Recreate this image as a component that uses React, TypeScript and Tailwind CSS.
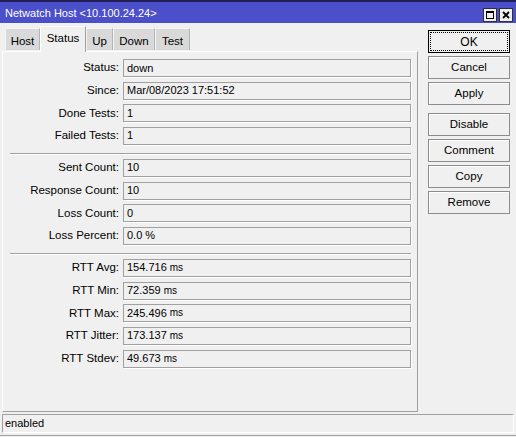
import React from "react";

type Row = { label: string; value: string; unit?: string };

const group1: Row[] = [
  { label: "Status", value: "down" },
  { label: "Since", value: "Mar/08/2023 17:51:52" },
  { label: "Done Tests", value: "1" },
  { label: "Failed Tests", value: "1" },
];
const group2: Row[] = [
  { label: "Sent Count", value: "10" },
  { label: "Response Count", value: "10" },
  { label: "Loss Count", value: "0" },
  { label: "Loss Percent", value: "0.0 %" },
];
const group3: Row[] = [
  { label: "RTT Avg", value: "154.716", unit: "ms" },
  { label: "RTT Min", value: "72.359", unit: "ms" },
  { label: "RTT Max", value: "245.496", unit: "ms" },
  { label: "RTT Jitter", value: "173.137", unit: "ms" },
  { label: "RTT Stdev", value: "49.673", unit: "ms" },
];

function Field({ row }: { row: Row }) {
  return (
    <div className="flex items-center h-[18px]">
      <div className="w-[116px] text-right leading-none text-[11.5px]">{row.label}:</div>
      <div className="ml-[4px] w-[288px] h-[18px] border border-[#a0a0a0] shadow-[1px_1px_0_#ffffff] pl-[3px] flex items-center leading-none">
        <span>{row.value}</span>
        {row.unit && <span className="ml-[3px] text-[10px]">{row.unit}</span>}
      </div>
    </div>
  );
}

function Group({ rows }: { rows: Row[] }) {
  return (
    <div className="flex flex-col gap-[4.67px]">
      {rows.map((r) => (
        <Field key={r.label} row={r} />
      ))}
    </div>
  );
}

function Separator() {
  return <div className="ml-[7px] w-[401px] h-[2px] border-t border-[#a0a0a0] bg-white mt-[8px] mb-[4px]" />;
}

function Btn({ label, focused }: { label: string; focused?: boolean }) {
  if (focused) {
    return (
      <div className="w-[82px] h-[23px] border border-black bg-[#f0f0f0] p-[1px]">
        <div className="w-full h-full border border-dotted border-black flex items-center justify-center text-[12px]">
          {label}
        </div>
      </div>
    );
  }
  return (
    <div className="w-[82px] h-[23px] border border-[#8c8c8c] bg-[#f0f0f0] shadow-[inset_1px_1px_0_#ffffff] flex items-center justify-center text-[11.5px]">
      {label}
    </div>
  );
}

function Tab({ label, w, selected }: { label: string; w: string; selected?: boolean }) {
  if (selected) {
    return (
      <div
        className={`${w} h-[26px] -mb-px relative z-10 bg-[#f0f0f0] border-t border-l border-white border-r border-r-[#a0a0a0] flex justify-center pt-[6px] leading-none text-[11.5px]`}
      >
        {label}
      </div>
    );
  }
  return (
    <div
      className={`${w} h-[22px] mb-px bg-[#d9d9d9] border-t border-l border-[#f4f4f4] border-r border-r-[#b4b4b4] flex justify-center pt-[7px] leading-none text-[11.5px]`}
    >
      {label}
    </div>
  );
}

export default function App() {
  return (
    <div className="w-[516px] h-[437px] bg-[#f0f0f0] overflow-hidden text-[11px] text-black [font-family:'Liberation_Sans',Arial,sans-serif] flex flex-col">
      <div className="h-[2px] bg-[#1f1f55]" />
      <div className="h-[21px] bg-[#4b4fc9] flex items-center pl-[5px] pr-[3px] text-white text-[11px]">
        <span className="leading-none mt-[1px]">Netwatch Host &lt;10.100.24.24&gt;</span>
        <div className="ml-auto flex gap-[2px] mt-[4px]">
          <div className="w-[14px] h-[14px] bg-[#f0f0f0] border border-[#303030] flex items-center justify-center">
            <div className="w-[8px] h-[8px] border border-black border-t-2" />
          </div>
          <div className="w-[14px] h-[14px] bg-[#f0f0f0] border border-[#303030] flex items-center justify-center">
            <svg width="8" height="8" viewBox="0 0 8 8">
              <path d="M1 1 L7 7 M7 1 L1 7" stroke="#000" strokeWidth="1.8" />
            </svg>
          </div>
        </div>
      </div>

      <div className="flex pt-[3px]">
        <div className="ml-[2px] w-[416px] flex flex-col">
          <div className="h-[25px] flex items-end pl-[3px]">
            <Tab label="Host" w="w-[35px]" />
            <Tab label="Status" w="w-[46px]" selected />
            <Tab label="Up" w="w-[27px]" />
            <Tab label="Down" w="w-[42px]" />
            <Tab label="Test" w="w-[35px]" />
          </div>
          <div className="h-[361px] border-t border-l border-white border-r border-b border-r-[#a0a0a0] border-b-[#a0a0a0] pt-[7px] flex flex-col">
            <Group rows={group1} />
            <Separator />
            <Group rows={group2} />
            <Separator />
            <Group rows={group3} />
          </div>
        </div>

        <div className="ml-[10px] mt-[4px] flex flex-col">
          <div className="flex flex-col gap-[3px]">
            <Btn label="OK" focused />
            <Btn label="Cancel" />
            <Btn label="Apply" />
          </div>
          <div className="flex flex-col gap-[3px] mt-[8px]">
            <Btn label="Disable" />
            <Btn label="Comment" />
            <Btn label="Copy" />
            <Btn label="Remove" />
          </div>
        </div>
      </div>

      <div className="mt-[2px] ml-[2px] w-[512px] h-[19px] border-t border-l border-[#a0a0a0] border-r border-b border-r-white border-b-white flex items-center pl-[2px] leading-none">
        enabled
      </div>
      <div className="mt-[2px] h-px bg-[#a0a0a0]" />
    </div>
  );
}
